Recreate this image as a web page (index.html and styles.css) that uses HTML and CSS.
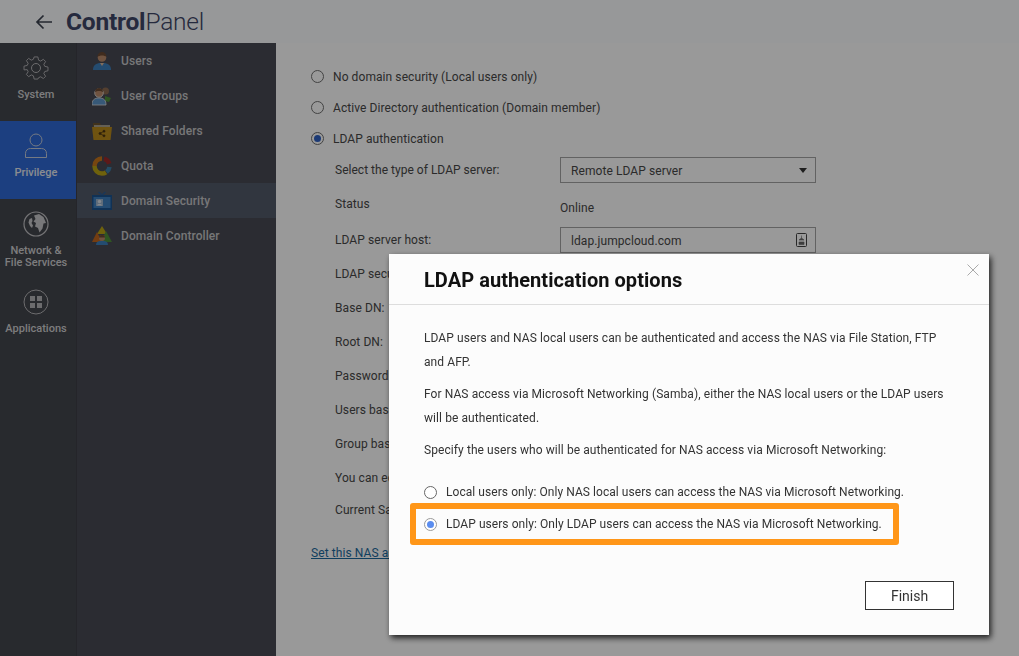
FILE: index.html
```html
<!DOCTYPE html>
<html lang="en">
<head>
<meta charset="utf-8">
<title>ControlPanel</title>
<link rel="stylesheet" href="styles.css">
</head>
<body>
<div class="app">
  <header class="topbar">
    <svg class="back" width="18" height="16" viewBox="0 0 18 16"><path d="M17 8H2M8.500 1.500 2 8l6.500 6.500" fill="none" stroke="#3d4350" stroke-width="1.700"/></svg>
    <h1 class="brand"><b>Control</b><span>Panel</span></h1>
  </header>
  <div class="main">
    <nav class="rail">
      <a class="rail-item rail-system">
        <svg width="26" height="26" viewBox="0 0 26 26" fill="none" stroke="#b5b5b8" stroke-width="1" stroke-linejoin="round"><path d="M11 1h4l.8 3.500 2.200 1 3-1.900 2.400 2.400-1.900 3 1 2.200 3.500.8v4l-3.500.8-1 2.200 1.900 3-2.400 2.400-3-1.900-2.200 1L15 25h-4l-.8-3.500-2.200-1-3 1.900-2.400-2.400 1.900-3-1-2.200L0 15v-4l3.500-.8 1-2.200-1.900-3L5 2.600l3 1.900 2.200-1z" transform="translate(1 1) scale(.923)"/><circle cx="13" cy="13" r="4.500"/></svg>
        <span>System</span>
      </a>
      <a class="rail-item rail-active">
        <svg width="24" height="26" viewBox="0 0 24 26" fill="none" stroke="#c3cbdb" stroke-width="1"><circle cx="12" cy="7" r="6"/><path d="M1.500 24.500v-4c0-3 2-5 5-5h11c3 0 5 2 5 5v4z"/></svg>
        <span>Privilege</span>
      </a>
      <a class="rail-item rail-network">
        <svg width="26" height="26" viewBox="0 0 26 26"><circle cx="13" cy="13" r="12" fill="none" stroke="#c2c2c5" stroke-width="1.200"/><path d="M6.500 8l2.500-1 .5 3-1 2 1.500 2.500-1 2.500-2-2-1.500-3.500zM11 4.500l5-1.500 4.500 3 2.500 6-2.500.5-1 5-3 4-1.500-4.500-3-1.500 1-3.500-2.500-1.500 2-2.500z" fill="#c8c8cb"/></svg>
        <span>Network &amp;<br>File Services</span>
      </a>
      <a class="rail-item rail-apps">
        <svg width="26" height="26" viewBox="0 0 26 26"><circle cx="13" cy="13" r="12" fill="none" stroke="#b5b5b8"/><path d="M7 7h5v5H7zM14 7h5v5h-5zM7 14h5v5H7zM14 14h5v5h-5z" fill="#b5b5b8"/></svg>
        <span>Applications</span>
      </a>
    </nav>
    <aside class="subnav">
      <a class="sub-item">
        <svg width="20" height="20" viewBox="0 0 20 20"><path d="M1 19c0-5 3-6 6-7h6c3 1 6 2 6 7z" fill="#3d7fbb"/><path d="M8 12h4l-2 3z" fill="#d9b79a"/><circle cx="10" cy="6.500" r="4.300" fill="#b98b6b"/><path d="M5.500 6c0-4 3-5 4.500-5s4.500 1 4.500 5c-2-2-7-2-9 0z" fill="#6b4a33"/></svg>
        <span>Users</span>
      </a>
      <a class="sub-item">
        <svg width="20" height="20" viewBox="0 0 20 20"><circle cx="13.500" cy="5" r="3.500" fill="#8b6a50"/><path d="M13 10l6 2-2 4-4-1z" fill="#4f8f3a"/><path d="M0 19c0-5 2-6 5-7h4c3 1 5 2 5 7z" fill="#5c94c8" stroke="#ddd" stroke-width=".8"/><circle cx="7" cy="7" r="4.300" fill="#b98b6b" stroke="#ddd" stroke-width=".8"/><path d="M3 6c0-3 2-4 4-4s4 1 4 4c-2-1.500-6-1.500-8 0z" fill="#6b4a33"/></svg>
        <span>User Groups</span>
      </a>
      <a class="sub-item">
        <svg width="20" height="20" viewBox="0 0 20 20"><path d="M1 2h7l1 2h9v4H1z" fill="#6c5430"/><path d="M2 4h16v3H2z" fill="#a9a08e"/><path d="M0 6h20l-1.500 13h-17z" fill="#ba8a1c"/><g stroke="#4a3410" fill="#4a3410" stroke-width=".8"><path d="M8 12.500l4-2.300M8 12.500l4 2.300"/><circle cx="8" cy="12.500" r="1"/><circle cx="12" cy="10.200" r="1"/><circle cx="12" cy="14.800" r="1"/></g></svg>
        <span>Shared Folders</span>
      </a>
      <a class="sub-item">
        <svg width="20" height="20" viewBox="0 0 20 20" fill="none" stroke-width="4.500"><path d="M10 17.500a7.500 7.500 0 0 1-7.500-7.500" stroke="#b9a315"/><path d="M2.500 10A7.500 7.500 0 0 1 10 2.500" stroke="#c7751c"/><path d="M12 2.800a7.500 7.500 0 0 1 5.300 5" stroke="#9c2a2a"/><path d="M17.500 11a7.500 7.500 0 0 1-3 5" stroke="#3d7fa8"/><path d="M14 16.300a7.500 7.500 0 0 1-4 1.200" stroke="#b9a315"/></svg>
        <span>Quota</span>
      </a>
      <a class="sub-item sub-active">
        <svg width="20" height="20" viewBox="0 0 20 20"><path d="M6.500 1 10 4l3.500-3" fill="none" stroke="#2a5d96" stroke-width="1.500"/><path d="M0 4h20v15H0z" fill="#1c5490"/><path d="M1.500 6h17v11h-17z" fill="#3f7fbe"/><path d="M4 8h7v7H4z" fill="#9db4cc"/><circle cx="7.500" cy="10.500" r="1.700" fill="#dbe3ec"/><path d="M5 14.500c0-2 5-2 5 0z" fill="#dbe3ec"/></svg>
        <span>Domain Security</span>
      </a>
      <a class="sub-item">
        <svg width="20" height="20" viewBox="0 0 20 20"><path d="M10 0l5 8H5z" fill="#b9a315"/><path d="M5 6l5 10H0z" fill="#c2661d"/><path d="M14 5l6 11H9z" fill="#4f8f3a"/><path d="M4 19c0-3 2-4 4-4h4c2 0 4 1 4 4z" fill="#3d7fbb"/><circle cx="10" cy="12" r="3" fill="#b98b6b"/><path d="M7 11.500c0-2 1.500-2.500 3-2.500s3 .5 3 2.500z" fill="#6b4a33"/></svg>
        <span>Domain Controller</span>
      </a>
    </aside>
    <section class="content">
      <label class="choice"><i class="radio"></i>No domain security (Local users only)</label>
      <label class="choice"><i class="radio"></i>Active Directory authentication (Domain member)</label>
      <label class="choice"><i class="radio radio-on"></i>LDAP authentication</label>
      <div class="fields">
        <div class="field f-select"><span class="field-label">Select the type of LDAP server:</span><div class="control">Remote LDAP server<i class="caret"></i></div></div>
        <div class="field f-status"><span class="field-label">Status</span><span class="value">Online</span></div>
        <div class="field f-host"><span class="field-label">LDAP server host:</span><div class="control">ldap.jumpcloud.com
          <svg class="host-icon" width="11" height="14" viewBox="0 0 11 14"><rect x=".5" y=".5" width="10" height="13" rx="1" fill="none" stroke="#444"/><path d="M5.500 2.500v3M3 7l2.500-2L8 7zM3 9h5v2.500H3z" fill="#666" stroke="#666" stroke-width=".6"/></svg>
        </div></div>
        <div class="field f-security"><span class="field-label">LDAP security:</span></div>
        <div class="field"><span class="field-label">Base DN:</span></div>
        <div class="field"><span class="field-label">Root DN:</span></div>
        <div class="field"><span class="field-label">Password:</span></div>
        <div class="field"><span class="field-label">Users base DN:</span></div>
        <div class="field"><span class="field-label">Group base DN:</span></div>
        <div class="field"><span class="field-label">You can edit</span></div>
        <div class="field f-samba"><span class="field-label">Current Samba</span></div>
      </div>
      <a class="nas-link">Set this NAS as</a>
    </section>
  </div>
</div>
<div class="scrim"></div>
<div class="modal">
  <div class="modal-head">
    <h2>LDAP authentication options</h2>
    <svg class="close" width="12" height="12" viewBox="0 0 12 12"><path d="M.5.500l11 11M11.500.500l-11 11" stroke="#aaa" stroke-width="1"/></svg>
  </div>
  <div class="modal-body">
    <p>LDAP users and NAS local users can be authenticated and access the NAS via File Station, FTP and AFP.</p>
    <p>For NAS access via Microsoft Networking (Samba), either the NAS local users or the LDAP users will be authenticated.</p>
    <p>Specify the users who will be authenticated for NAS access via Microsoft Networking:</p>
    <div class="options">
      <label class="option"><i class="radio radio-modal"></i>Local users only: Only NAS local users can access the NAS via Microsoft Networking.</label>
      <label class="option"><i class="radio radio-modal radio-blue"></i>LDAP users only: Only LDAP users can access the NAS via Microsoft Networking.</label>
      <div class="highlight"></div>
    </div>
  </div>
  <div class="modal-foot"><button class="finish">Finish</button></div>
</div>
</body>
</html>
```

FILE: styles.css
```css
* { box-sizing: border-box; }
html, body { margin: 0; height: 100%; overflow: hidden; }
body { font-family: Roboto, "Liberation Sans", sans-serif; font-size: 12px; letter-spacing: .08px; color: #4a4a4a; }
.app { display: flex; flex-direction: column; height: 656px; }

.topbar { display: flex; align-items: center; height: 43px; flex: none; background: #fcfdff; padding-left: 35px; }
.back { margin-right: 13px; }
.brand { margin: 0; font-size: 24.5px; line-height: 43px; font-weight: 400; color: #3f4668; letter-spacing: -.2px; }
.brand b { font-weight: 700; }
.brand span { font-weight: 300; }

.main { display: flex; flex: 1; min-height: 0; }
.rail { width: 77px; flex: none; background: #44464d; border-right: 1px solid #3e3f46; display: flex; flex-direction: column; }
.rail-item { display: flex; flex-direction: column; align-items: center; padding-right: 4px; font-size: 11px; font-weight: 500; letter-spacing: 0; color: #d0d0d2; text-align: center; line-height: 12px; }
.rail-system { height: 78px; padding-top: 12px; }
.rail-system span { margin-top: 8px; }
.rail-active { height: 78px; padding-top: 12px; background: #2f69d5; color: #e6e9f0; }
.rail-active span { margin-top: 8px; }
.rail-network { height: 90px; padding-top: 12px; }
.rail-network span { margin-top: 8px; }
.rail-apps { padding-top: 0; }
.rail-apps span { margin-top: 8px; }

.subnav { width: 199px; flex: none; background: #494a54; }
.sub-item { display: flex; align-items: center; height: 35px; padding-left: 15px; font-size: 12px; font-weight: 500; color: #c6c6c8; }
.sub-item svg { margin-right: 9px; flex: none; }
.sub-active { background: #535a69; }

.content { flex: 1; background: #fff; padding: 18px 0 0 35px; color: #484848; position: relative; }
.choice { display: flex; align-items: center; height: 31px; white-space: nowrap; }
.radio { width: 13px; height: 13px; border: 1px solid #707070; border-radius: 50%; background: transparent; margin-right: 9px; flex: none; display: flex; align-items: center; justify-content: center; }
.radio-on::after { content: ""; width: 7px; height: 7px; border-radius: 50%; background: #2f62c4; }
.fields { padding-left: 24px; }
.field { display: flex; align-items: center; height: 34px; }
.field-label { width: 225px; flex: none; white-space: nowrap; }
.control { width: 256px; height: 26px; border: 1px solid #a3a3a3; display: flex; align-items: center; justify-content: space-between; padding: 1px 8px 0 10px; }
.caret { width: 0; height: 0; border-left: 4px solid transparent; border-right: 4px solid transparent; border-top: 5px solid #333; }
.host-icon { margin-top: -1px; }
.f-select { height: 36px; margin-top: -2px; }
.f-select .field-label { letter-spacing: .02px; }
.f-status { height: 35px; margin-top: -1px; }
.f-status .field-label { margin-top: -2px; }
.f-status .value { margin-top: 6px; }
.f-host { height: 36px; }
.f-security { margin-top: -1px; }
.f-samba { height: 30px; }
.nas-link { display: inline-block; margin-top: 21px; color: #1c6a9e; text-decoration: underline; }

.scrim { position: fixed; inset: 0; background: rgba(0, 0, 0, .4); }
.modal { position: fixed; left: 389px; top: 254px; width: 600px; height: 381px; background: #fcfcfc; box-shadow: 2px 3px 6px rgba(0, 0, 0, .8); color: #333; display: flex; flex-direction: column; }
.modal-head { height: 51px; border-bottom: 1px solid #ddd; flex: none; padding-left: 35px; position: relative; }
.modal-head h2 { margin: 0; font-size: 20px; line-height: 52px; font-weight: 700; color: #111; letter-spacing: .05px; }
.close { position: absolute; right: 10px; top: 10px; }
.modal-body { flex: 1; padding: 21px 35px 0; font-size: 12px; line-height: 24px; }
.modal-body p { margin: 0 0 8px; }
.options { position: relative; margin-top: 14px; }
.option { display: flex; align-items: center; height: 32px; white-space: nowrap; letter-spacing: .06px; }
.radio-modal { margin-right: 9px; width: 13px; height: 13px; border-color: #666; background: #fff; }
.radio-blue { border-color: #9a9a9a; }
.radio-blue::after { content: ""; width: 7px; height: 7px; border-radius: 50%; background: #5b8def; }
.highlight { position: absolute; left: -14px; top: 27px; width: 489px; height: 42px; border: 6px solid #ff9618; border-radius: 3px; }
.modal-foot { flex: none; display: flex; justify-content: flex-end; padding: 0 35px 25px; }
.finish { width: 89px; height: 29px; background: #fff; border: 1px solid #333; font-family: Roboto, "Liberation Sans", sans-serif; font-size: 14px; color: #333; border-radius: 0; }
```
